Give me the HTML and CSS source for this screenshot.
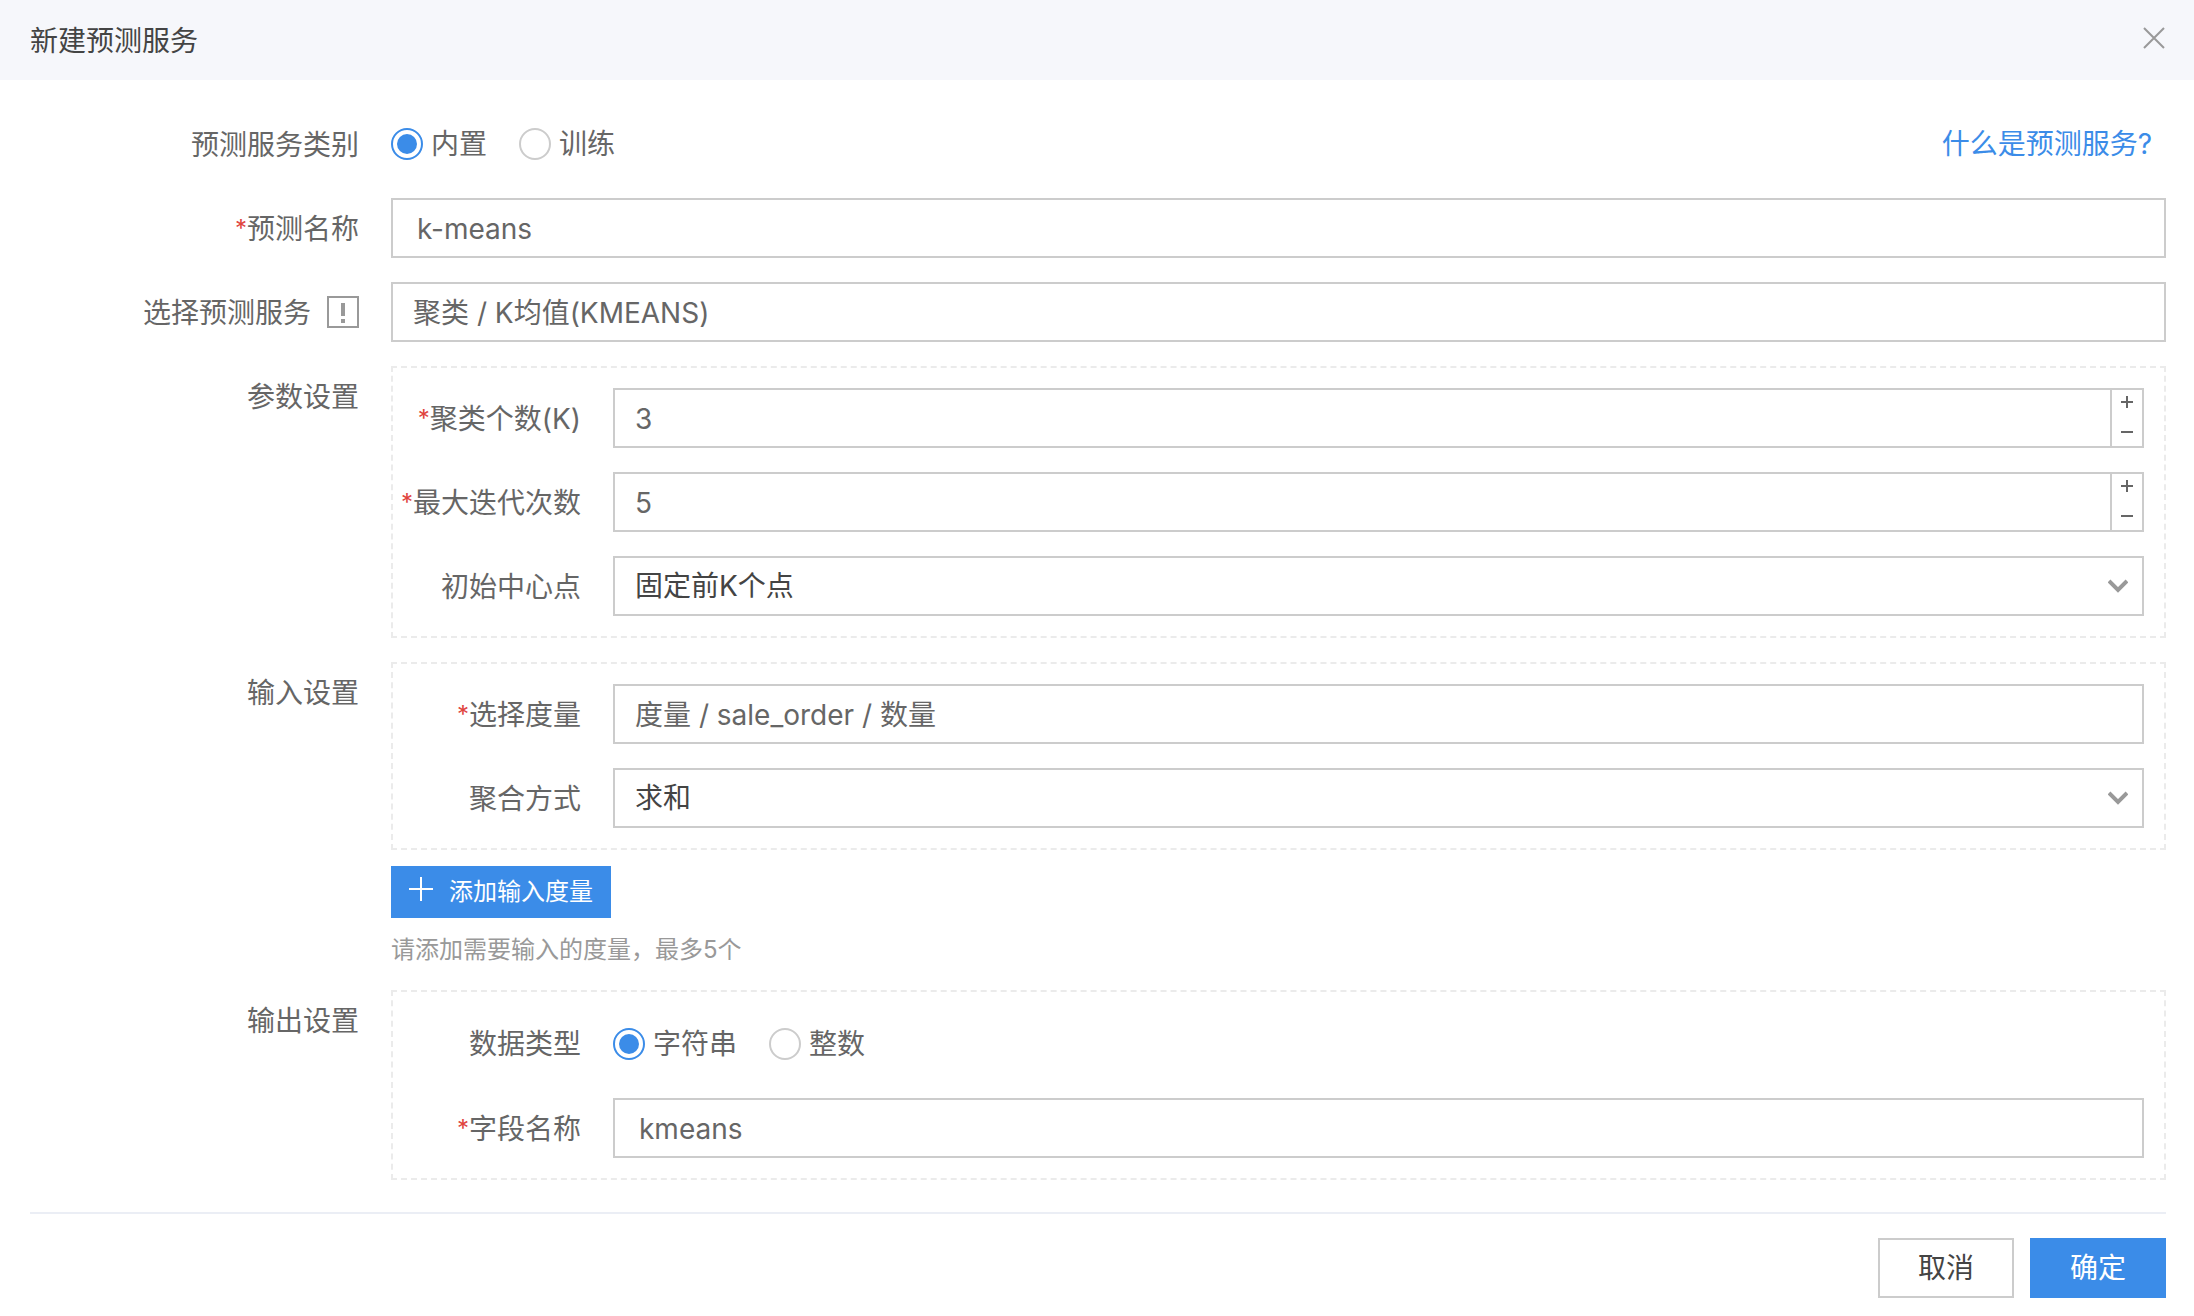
FILE: index.html
```html
<!DOCTYPE html>
<html lang="zh-CN">
<head>
<meta charset="utf-8">
<title>新建预测服务</title>
<link rel="stylesheet" href="styles.css">
</head>
<body>
<form class="dialog">
  <header class="dialog-header">
    <h1 class="dialog-title">新建预测服务</h1>
    <button type="button" class="close" aria-label="关闭">
      <svg width="24" height="24" viewBox="0 0 24 24" fill="none" stroke="#999" stroke-width="2"><path d="M2 2l20 20M22 2L2 22"/></svg>
    </button>
  </header>

  <main class="dialog-body">
    <div class="row">
      <span class="label" id="kind">预测服务类别</span>
      <div class="split">
        <div class="radios" role="radiogroup" aria-labelledby="kind">
          <label class="radio"><input type="radio" name="kind" checked>内置</label>
          <label class="radio"><input type="radio" name="kind">训练</label>
        </div>
        <a class="help" href="#help">什么是预测服务?</a>
      </div>
    </div>

    <div class="row">
      <label class="label" for="name"><span class="required">*</span>预测名称</label>
      <input class="field field-text" id="name" type="text" value="k-means">
    </div>

    <div class="row">
      <div class="label">
        <label for="service">选择预测服务</label>
        <svg class="info" width="32" height="32" viewBox="0 0 32 32"><rect x="1" y="1" width="30" height="30" fill="none" stroke="#999" stroke-width="2"/><path fill="#999" d="M14 7h4v13h-4zM14 23h4v4h-4z"/></svg>
      </div>
      <input class="field field-picker" id="service" type="text" readonly value="聚类 / K均值(KMEANS)">
    </div>

    <div class="row">
      <span class="label">参数设置</span>
      <section class="group">
        <div class="subrow">
          <label class="label" for="k"><span class="required">*</span>聚类个数(K)</label>
          <div class="number">
            <input class="field" id="k" type="number" value="3">
            <div class="steps">
              <button type="button" class="step" aria-label="增加"><svg width="14" height="18" viewBox="0 0 14 18" stroke="#666" stroke-width="2"><path d="M1 7h12M7 1v12"/></svg></button>
              <button type="button" class="step" aria-label="减少"><svg width="14" height="18" viewBox="0 0 14 18" stroke="#666" stroke-width="2"><path d="M1 9h12"/></svg></button>
            </div>
          </div>
        </div>
        <div class="subrow">
          <label class="label" for="iterations"><span class="required">*</span>最大迭代次数</label>
          <div class="number">
            <input class="field" id="iterations" type="number" value="5">
            <div class="steps">
              <button type="button" class="step" aria-label="增加"><svg width="14" height="18" viewBox="0 0 14 18" stroke="#666" stroke-width="2"><path d="M1 7h12M7 1v12"/></svg></button>
              <button type="button" class="step" aria-label="减少"><svg width="14" height="18" viewBox="0 0 14 18" stroke="#666" stroke-width="2"><path d="M1 9h12"/></svg></button>
            </div>
          </div>
        </div>
        <div class="subrow">
          <label class="label" for="center">初始中心点</label>
          <div class="select">
            <select class="field" id="center"><option>固定前K个点</option></select>
            <svg class="chevron" width="20" height="14" viewBox="0 0 20 14" fill="none" stroke="#999" stroke-width="4"><path d="M1 2l9 9 9-9"/></svg>
          </div>
        </div>
      </section>
    </div>

    <div class="row">
      <span class="label">输入设置</span>
      <div>
        <section class="group">
          <div class="subrow">
            <label class="label" for="measure"><span class="required">*</span>选择度量</label>
            <input class="field field-picker" id="measure" type="text" readonly value="度量 / sale_order / 数量">
          </div>
          <div class="subrow">
            <label class="label" for="aggregate">聚合方式</label>
            <div class="select">
              <select class="field" id="aggregate"><option>求和</option></select>
              <svg class="chevron" width="20" height="14" viewBox="0 0 20 14" fill="none" stroke="#999" stroke-width="4"><path d="M1 2l9 9 9-9"/></svg>
            </div>
          </div>
        </section>
        <button type="button" class="add">
          <svg width="24" height="32" viewBox="0 0 24 32" stroke="#fff" stroke-width="2"><path d="M0 13h24M12 1v24"/></svg>
          添加输入度量
        </button>
        <p class="hint">请添加需要输入的度量，最多5个</p>
      </div>
    </div>

    <div class="row">
      <span class="label">输出设置</span>
      <section class="group">
        <div class="subrow">
          <span class="label" id="type">数据类型</span>
          <div class="radios" role="radiogroup" aria-labelledby="type">
            <label class="radio"><input type="radio" name="type" checked>字符串</label>
            <label class="radio"><input type="radio" name="type">整数</label>
          </div>
        </div>
        <div class="subrow">
          <label class="label" for="fieldname"><span class="required">*</span>字段名称</label>
          <input class="field field-text" id="fieldname" type="text" value="kmeans">
        </div>
      </section>
    </div>
  </main>

  <footer class="dialog-footer">
    <button type="button" class="button">取消</button>
    <button type="submit" class="button button-primary">确定</button>
  </footer>
</form>
</body>
</html>
```
FILE: styles.css
```css
* {
  box-sizing: border-box;
}

body {
  margin: 0;
  background: #fff;
  color: #666;
  font: 28px/40px Inter, "Noto Sans CJK SC", sans-serif;
}

button,
input,
select {
  margin: 0;
  font: inherit;
}

svg {
  display: block;
  flex: none;
}

.dialog-header {
  display: flex;
  align-items: center;
  justify-content: space-between;
  height: 80px;
  padding: 0 28px 4px 30px;
  background: #f6f7fb;
}

.dialog-title {
  margin: 0;
  padding-top: 6px;
  color: #444;
  font-size: 28px;
  font-weight: 400;
}

.close {
  padding: 0;
  border: 0;
  background: none;
}

.dialog-body {
  display: flex;
  flex-direction: column;
  gap: 24px;
  padding: 34px 28px 32px 30px;
}

.row {
  display: grid;
  grid-template-columns: 329px minmax(0, 1fr);
  column-gap: 32px;
}

.label {
  display: flex;
  align-items: center;
  justify-content: flex-end;
  height: 60px;
  padding-top: 2px;
  white-space: nowrap;
}

.required {
  width: 12px;
  color: #e0443e;
  font-size: 24px;
}

.info {
  margin: 0 0 2px 16px;
}

.split {
  display: flex;
  align-items: center;
  justify-content: space-between;
  padding-right: 14px;
}

.help {
  color: #3b8ce8;
  text-decoration: none;
}

.radios {
  display: flex;
  align-items: center;
  gap: 32px;
  min-height: 60px;
}

.radio {
  display: flex;
  align-items: center;
  gap: 8px;
}

.radio input {
  display: grid;
  place-items: center;
  width: 32px;
  height: 32px;
  border: 2px solid #ccc;
  border-radius: 50%;
  background: #fff;
  appearance: none;
}

.radio input:checked {
  border-color: #3b8ce8;
}

.radio input:checked::before {
  content: "";
  width: 20px;
  height: 20px;
  border-radius: 50%;
  background: #3b8ce8;
}

.field {
  width: 100%;
  height: 60px;
  padding: 0 20px;
  border: 2px solid #ccc;
  border-radius: 0;
  outline: 0;
  background: #fff;
  color: #666;
  appearance: none;
}

.field-text {
  padding: 2px 24px 0;
}

.field-picker {
  padding-bottom: 2px;
}

.group {
  display: flex;
  flex-direction: column;
  gap: 24px;
  padding: 20px 20px 20px 0;
  border: 2px dashed #ebebeb;
}

.subrow {
  display: grid;
  grid-template-columns: 188px minmax(0, 1fr);
  align-items: center;
  column-gap: 32px;
}

.subrow .radios {
  min-height: 62px;
  padding-top: 2px;
}

.number {
  display: flex;
  border: 2px solid #ccc;
}

.number .field {
  flex: 1;
  min-width: 0;
  height: 56px;
  padding-top: 2px;
  border: 0;
  appearance: textfield;
}

.number .field::-webkit-inner-spin-button {
  display: none;
}

.steps {
  display: grid;
  grid-template-rows: 1fr 1fr;
  width: 32px;
  border-left: 2px solid #ccc;
}

.step {
  display: grid;
  place-items: center;
  padding: 0;
  border: 0;
  background: none;
}

.select {
  display: grid;
  align-items: center;
}

.select > * {
  grid-area: 1 / 1;
}

.select .field {
  color: #444;
}

.chevron {
  justify-self: end;
  margin-right: 16px;
  pointer-events: none;
}

.add {
  display: flex;
  align-items: center;
  gap: 16px;
  height: 52px;
  margin-top: 16px;
  padding: 0 18px;
  border: 0;
  background: #3b8ce8;
  color: #fff;
  font-size: 24px;
}

.hint {
  margin: 16px 0 0;
  color: #999;
  font-size: 24px;
  line-height: 32px;
}

.dialog-footer {
  display: flex;
  justify-content: flex-end;
  gap: 16px;
  margin: 0 28px 0 30px;
  padding: 24px 0 18px;
  border-top: 2px solid #ebeef5;
}

.button {
  width: 136px;
  height: 60px;
  padding: 0;
  border: 2px solid #ccc;
  background: #fff;
  color: #444;
}

.button-primary {
  border-color: #3b8ce8;
  background: #3b8ce8;
  color: #fff;
}
```
